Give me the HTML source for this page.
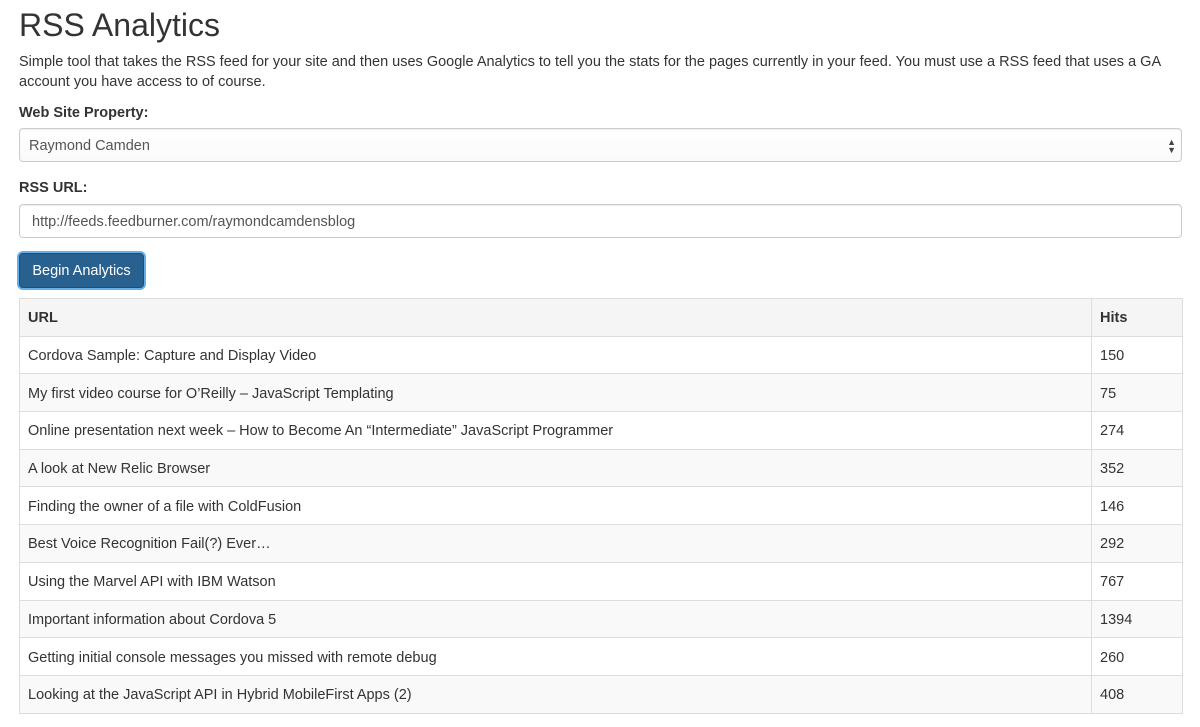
<!DOCTYPE html>
<html><head><meta charset="utf-8"><style>
body{margin:0;background:#fff;font-family:"Liberation Sans",Arial,sans-serif;color:#333;font-size:14.5px;}
.c{position:absolute;left:19px;width:1163px;top:0}
h1{font-size:32px;font-weight:normal;margin:0;position:absolute;top:6px;left:0;line-height:38px;color:#333}
p{position:absolute;top:52px;margin:0;line-height:20px;width:1163px}
.lbl{position:absolute;font-weight:bold;line-height:20px}
.box{position:absolute;left:0;border:1px solid #ccc;border-radius:4px;box-sizing:border-box;width:1163px;line-height:34px;color:#555;box-shadow:inset 0 1px 1px rgba(0,0,0,.075)}
.btn{position:absolute;left:0;top:253px;width:125px;height:35px;box-sizing:border-box;background:#286090;color:#fff;border:1px solid #204d74;border-radius:4px;line-height:35px;text-align:center;box-shadow:0 0 0 2px #66afe9}
table{position:absolute;top:298px;left:0;width:1164px;border-collapse:collapse}
td,th{border:1px solid #ddd;height:37.7px;box-sizing:border-box;padding:2px 8px 0;text-align:left;line-height:20px}
th{background:#f5f5f5}
tr:nth-child(odd) td{background:#f9f9f9}
tr.w td{background:#fff}
</style></head><body><div class="c">
<h1>RSS Analytics</h1>
<p>Simple tool that takes the RSS feed for your site and then uses Google Analytics to tell you the stats for the pages currently in your feed. You must use a RSS feed that uses a GA account you have access to of course.</p>
<div class="lbl" style="top:103px">Web Site Property:</div>
<div class="box" style="top:128px;height:34px;padding-left:9px;background:linear-gradient(#fff,#fafafa)">Raymond Camden<span style="position:absolute;right:5px;top:0;font-size:9px;line-height:8px;padding-top:9px;color:#444">▲<br>▼</span></div>
<div class="lbl" style="top:178px">RSS URL:</div>
<div class="box" style="top:204px;height:34px;padding-left:12px">http://feeds.feedburner.com/raymondcamdensblog</div>
<div class="btn">Begin Analytics</div>
<table>
<tr><th>URL</th><th style="width:91px">Hits</th></tr>
<tr class="w"><td>Cordova Sample: Capture and Display Video</td><td>150</td></tr>
<tr><td>My first video course for O’Reilly – JavaScript Templating</td><td>75</td></tr>
<tr class="w"><td>Online presentation next week – How to Become An “Intermediate” JavaScript Programmer</td><td>274</td></tr>
<tr><td>A look at New Relic Browser</td><td>352</td></tr>
<tr class="w"><td>Finding the owner of a file with ColdFusion</td><td>146</td></tr>
<tr><td>Best Voice Recognition Fail(?) Ever…</td><td>292</td></tr>
<tr class="w"><td>Using the Marvel API with IBM Watson</td><td>767</td></tr>
<tr><td>Important information about Cordova 5</td><td>1394</td></tr>
<tr class="w"><td>Getting initial console messages you missed with remote debug</td><td>260</td></tr>
<tr><td>Looking at the JavaScript API in Hybrid MobileFirst Apps (2)</td><td>408</td></tr>
</table>
</div></body></html>
